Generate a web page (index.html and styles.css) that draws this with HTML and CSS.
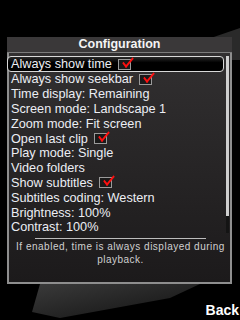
FILE: index.html
```html
<!DOCTYPE html>
<html lang="en">
<head>
    <meta charset="UTF-8">
    <title>Configuration</title>
    <link rel="stylesheet" href="styles.css">
</head>
<body>
<div class="screen">
    <svg class="deco" width="240" height="320" viewBox="0 0 240 320">
        <defs>
            <linearGradient id="g1" x1="0" y1="0" x2="1" y2="1">
                <stop offset="0" stop-color="#3a3a3a"/>
                <stop offset="1" stop-color="#111"/>
            </linearGradient>
        </defs>
        <polygon points="205,40 240,28 240,60 225,60" fill="#2a2a2a"/>
        <polygon points="40,284 200,284 170,298 60,318 32,312" fill="url(#g1)"/>
    </svg>
    <div class="dialog">
        <div class="title">Configuration</div>
        <div class="body">
            <ul class="list">
                <li class="selected">Always show time <span class="check"></span></li>
                <li>Always show seekbar <span class="check"></span></li>
                <li>Time display: Remaining</li>
                <li>Screen mode: Landscape 1</li>
                <li>Zoom mode: Fit screen</li>
                <li>Open last clip <span class="check"></span></li>
                <li>Play mode: Single</li>
                <li>Video folders</li>
                <li>Show subtitles <span class="check"></span></li>
                <li>Subtitles coding: Western</li>
                <li>Brightness: 100%</li>
                <li>Contrast: 100%</li>
            </ul>
            <div class="scrollbar"><div class="thumb"></div></div>
        </div>
        <div class="separator"></div>
        <div class="help">If enabled, time is always displayed during playback.</div>
    </div>
    <div class="softkeys"><span class="back">Back</span></div>
</div>
</body>
</html>
```
FILE: styles.css
```css
* {
    padding: 0;
    margin: 0;
    box-sizing: border-box;
}

body {
    background-color: #000;
    font-family: "Liberation Sans", Arial, sans-serif;
}

.screen {
    width: 240px;
    height: 320px;
    position: relative;
    overflow: hidden;
    display: flex;
    flex-direction: column;
}

.deco {
    position: absolute;
    left: 0;
    top: 0;
}

.dialog {
    position: relative;
    margin: 37px 0 0 7px;
    width: 225px;
    height: 247px;
    background: linear-gradient(#333132, #1c1a1b);
    border: 2px solid #8e8e8e;
    border-top: none;
    display: flex;
    flex-direction: column;
}

.title {
    height: 16px;
    margin: 0 -2px;
    background-color: #3a3839;
    border-bottom: 1px solid #7c7c7c;
    color: #f4f4f4;
    font-size: 12.5px;
    font-weight: bold;
    line-height: 15px;
    text-align: center;
}

.body {
    display: flex;
    margin-top: 3px;
    height: 179px;
}

.list {
    list-style: none;
    width: 217px;
    margin-left: -2px;
}

.list li {
    height: 14.8px;
    line-height: 14px;
    padding-left: 4px;
    color: #eceef4;
    font-size: 12.7px;
    display: flex;
    align-items: center;
    white-space: nowrap;
}

.list li.selected {
    height: 16px;
    background: linear-gradient(#2a2a2a, #000 40%);
    border: 1px solid #d8d8d8;
    border-radius: 4px;
    padding-left: 3px;
}

.check {
    position: relative;
    display: inline-block;
    width: 13px;
    height: 11px;
    margin-left: 6px;
    border: 1px solid #9a9a9a;
    background-color: #1a1a1a;
}

.check::after {
    content: "";
    position: absolute;
    left: 3px;
    top: -2px;
    width: 10px;
    height: 4px;
    border-left: 2.5px solid #ff1010;
    border-bottom: 2.5px solid #ff1010;
    transform: rotate(-50deg) skewX(-12deg);
}

.scrollbar {
    width: 3px;
    height: 177px;
    margin-left: 2px;
    background-color: #141414;
}

.thumb {
    height: 160px;
    background-color: #cfcfcf;
}

.separator {
    margin: 3px 24px 0 26px;
    border-top: 1px solid #bcbcbc;
}

.help {
    margin: 1px -2px 0 0;
    color: #d0d0d0;
    font-size: 10px;
    letter-spacing: 0.5px;
    line-height: 13px;
    text-align: center;
}

.softkeys {
    margin-top: auto;
    height: 20px;
    padding-bottom: 3px;
    display: flex;
    justify-content: flex-end;
    align-items: flex-end;
}

.back {
    color: #fff;
    font-size: 14px;
    font-weight: bold;
    line-height: 14px;
    padding-right: 1px;
}
```
